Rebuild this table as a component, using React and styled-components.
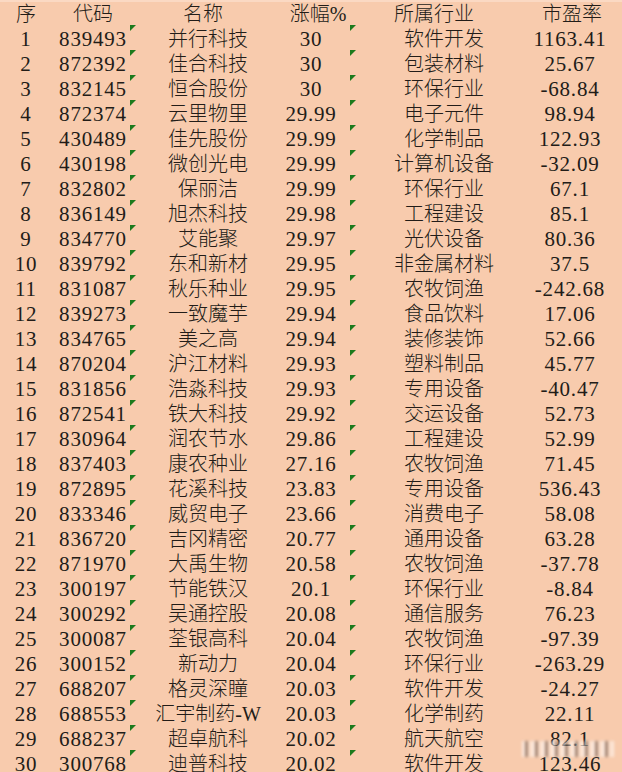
import React from "react";
import styled, { createGlobalStyle } from "styled-components";

const rows = [
  [1, "839493", "并行科技", "30", "软件开发", "1163.41"],
  [2, "872392", "佳合科技", "30", "包装材料", "25.67"],
  [3, "832145", "恒合股份", "30", "环保行业", "-68.84"],
  [4, "872374", "云里物里", "29.99", "电子元件", "98.94"],
  [5, "430489", "佳先股份", "29.99", "化学制品", "122.93"],
  [6, "430198", "微创光电", "29.99", "计算机设备", "-32.09"],
  [7, "832802", "保丽洁", "29.99", "环保行业", "67.1"],
  [8, "836149", "旭杰科技", "29.98", "工程建设", "85.1"],
  [9, "834770", "艾能聚", "29.97", "光伏设备", "80.36"],
  [10, "839792", "东和新材", "29.95", "非金属材料", "37.5"],
  [11, "831087", "秋乐种业", "29.95", "农牧饲渔", "-242.68"],
  [12, "839273", "一致魔芋", "29.94", "食品饮料", "17.06"],
  [13, "834765", "美之高", "29.94", "装修装饰", "52.66"],
  [14, "870204", "沪江材料", "29.93", "塑料制品", "45.77"],
  [15, "831856", "浩淼科技", "29.93", "专用设备", "-40.47"],
  [16, "872541", "铁大科技", "29.92", "交运设备", "52.73"],
  [17, "830964", "润农节水", "29.86", "工程建设", "52.99"],
  [18, "837403", "康农种业", "27.16", "农牧饲渔", "71.45"],
  [19, "872895", "花溪科技", "23.83", "专用设备", "536.43"],
  [20, "833346", "威贸电子", "23.66", "消费电子", "58.08"],
  [21, "836720", "吉冈精密", "20.77", "通用设备", "63.28"],
  [22, "871970", "大禹生物", "20.58", "农牧饲渔", "-37.78"],
  [23, "300197", "节能铁汉", "20.1", "环保行业", "-8.84"],
  [24, "300292", "吴通控股", "20.08", "通信服务", "76.23"],
  [25, "300087", "荃银高科", "20.04", "农牧饲渔", "-97.39"],
  [26, "300152", "新动力", "20.04", "环保行业", "-263.29"],
  [27, "688207", "格灵深瞳", "20.03", "软件开发", "-24.27"],
  [28, "688553", "汇宇制药-W", "20.03", "化学制药", "22.11"],
  [29, "688237", "超卓航科", "20.02", "航天航空", "82.1"],
  [30, "300768", "迪普科技", "20.02", "软件开发", "123.46"],
];

const GlobalStyle = createGlobalStyle`
  html, body {
    margin: 0;
    padding: 0;
    background: #f8cbad;
    overflow: hidden;
  }
`;

const Sheet = styled.div`
  position: relative;
  width: 622px;
  height: 772px;
  overflow: hidden;
  background: #f8cbad;
  color: #221c18;
  font-family: "Liberation Serif", "Noto Sans CJK SC", serif;
`;

const Row = styled.div`
  display: grid;
  grid-template-columns: 52px 78px 156px 64px 160px 112px;
  height: 25px;
  border-top: ${(p) => (p.$head ? "2px solid #fbd9c3" : "none")};
  box-sizing: border-box;
`;

const Cell = styled.div`
  position: relative;
  display: flex;
  align-items: flex-end;
  justify-content: center;
  padding: 0 ${(p) => p.$pr || 0}px 0 ${(p) => p.$pl || 0}px;
  font-family: "Liberation Serif", "Noto Sans CJK SC", serif;
  font-size: ${(p) => (p.$cjk ? 20 : 21)}px;
  font-weight: ${(p) => (p.$cjk ? 300 : 400)};
  letter-spacing: ${(p) => (p.$cjk ? 0 : 0.8)}px;
  line-height: 22px;
  white-space: nowrap;

  ${(p) =>
    p.$flag &&
    `
    &::before {
      content: "";
      position: absolute;
      left: 0;
      top: 0;
      width: 0;
      height: 0;
      border-top: 6px solid #1c7a1c;
      border-right: 6px solid transparent;
    }
  `}
`;

const Watermark = styled.div`
  position: absolute;
  left: 522px;
  top: 741px;
  width: 92px;
  height: 16px;
  background: repeating-linear-gradient(
    90deg,
    rgba(255, 255, 255, 0.6) 0 3px,
    rgba(90, 70, 60, 0.55) 3px 6px,
    rgba(255, 240, 230, 0.5) 6px 10px
  );
  filter: blur(1.6px);
`;

const Header = () => (
  <Row $head>
    <Cell $cjk>序</Cell>
    <Cell $cjk $pl={4}>代码</Cell>
    <Cell $cjk $pr={10}>名称</Cell>
    <Cell $cjk>涨幅%</Cell>
    <Cell $cjk $pl={8}>所属行业</Cell>
    <Cell $cjk $pl={12}>市盈率</Cell>
  </Row>
);

export default function App() {
  return (
    <>
      <GlobalStyle />
      <Sheet>
        <Header />
        {rows.map(([no, code, name, pct, ind, pe]) => (
          <Row key={no}>
            <Cell>{no}</Cell>
            <Cell $pl={4}>{code}</Cell>
            <Cell $cjk $flag>
              {name}
            </Cell>
            <Cell $pr={14}>{pct}</Cell>
            <Cell $cjk $flag $pl={28}>
              {ind}
            </Cell>
            <Cell $pl={8}>{pe}</Cell>
          </Row>
        ))}
        <Watermark />
      </Sheet>
    </>
  );
}
